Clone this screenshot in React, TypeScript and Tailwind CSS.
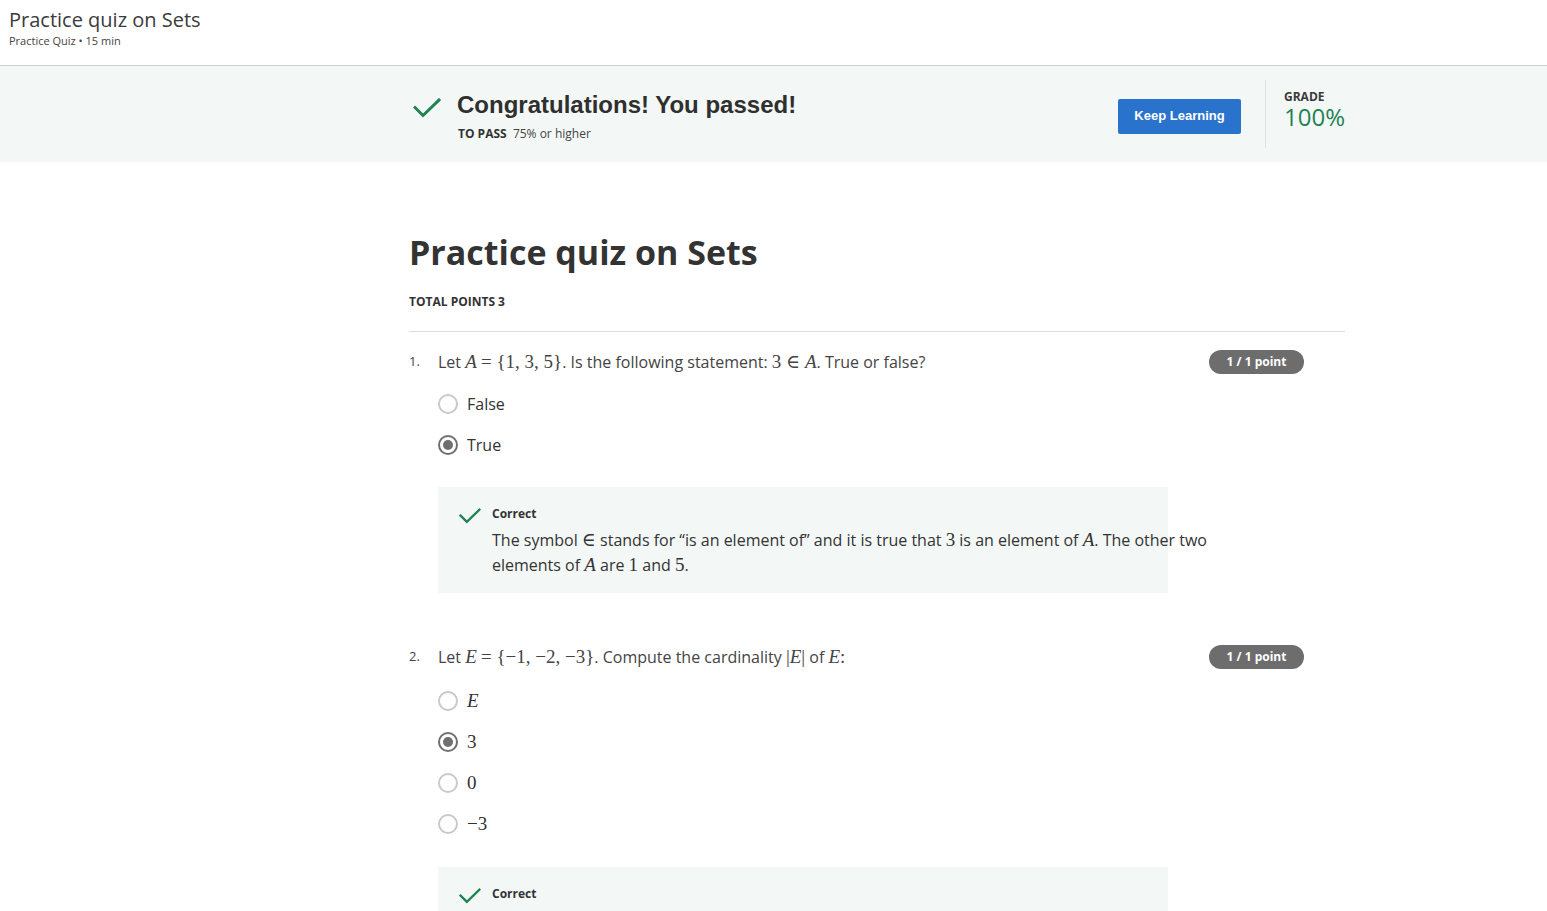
import type { ReactNode } from 'react';

const sans = "font-['Open_Sans',sans-serif]";
const arial = "font-['Liberation_Sans',sans-serif]";

function M({ children }: { children: ReactNode }) {
  return <span className="font-['Liberation_Serif','DejaVu_Serif',serif] text-[19px] leading-none">{children}</span>;
}

function V({ children }: { children: ReactNode }) {
  return <span className="font-['Liberation_Serif','DejaVu_Serif',serif] text-[19px] italic leading-none">{children}</span>;
}

function Check({ className }: { className: string }) {
  return (
    <svg viewBox="0 0 28 20" className={className} fill="none">
      <path d="M2 9.5 L10 17.5 L26 2" stroke="#1f8354" strokeWidth="3" strokeLinecap="square" />
    </svg>
  );
}

function Radio({ checked }: { checked?: boolean }) {
  return checked ? (
    <span className="flex h-5 w-5 shrink-0 items-center justify-center rounded-full border-2 border-[#6f6f6f]">
      <span className="h-[10px] w-[10px] rounded-full bg-[#6f6f6f]" />
    </span>
  ) : (
    <span className="h-5 w-5 shrink-0 rounded-full border-2 border-[#c9c9c9]" />
  );
}

function Option({ checked, children }: { checked?: boolean; children: ReactNode }) {
  return (
    <div className="flex h-[41px] items-center gap-[9px] text-[16px] text-[#333]">
      <Radio checked={checked} />
      <span>{children}</span>
    </div>
  );
}

function Badge() {
  return (
    <span className={`${sans} flex h-6 w-[95px] items-center justify-center rounded-full bg-[#6d6d6d] text-[12px] font-bold text-white`}>
      1 / 1 point
    </span>
  );
}

function Feedback({ children }: { children?: ReactNode }) {
  return (
    <div className="w-[730px] bg-[#f3f8f6] pl-[21px] pt-[19px] pb-[15px]">
      <div className="flex items-start gap-[11px]">
        <Check className="mt-[2px] h-[16px] w-[22px] shrink-0" />
        <div>
          <p className="text-[12px] font-bold leading-4 text-[#333]">Correct</p>
          {children && <div className="mt-[6px] w-[725px] text-[16px] leading-[25px] text-[#333]">{children}</div>}
        </div>
      </div>
    </div>
  );
}

export default function App() {
  return (
    <div className={`${sans} min-h-screen bg-white text-[#333]`}>
      <header className="h-[66px] border-b border-[#c8d3cf] px-[9px] pt-[7px]">
        <h1 className="text-[20px] leading-[26px] text-[#3b3b3b]">Practice quiz on Sets</h1>
        <p className="text-[11px] leading-4 text-[#444]">Practice Quiz • 15 min</p>
      </header>

      <section className="flex h-[96px] bg-[#f3f8f6]">
        <div className="ml-[409px] flex w-[936px] items-center">
          <Check className="mb-[12px] ml-[4px] h-[20px] w-[28px] shrink-0" />
          <div className="ml-[16px] mt-[6px] flex-1">
            <h2 className={`${arial} text-[24px] font-bold leading-7 text-[#2f2f2f]`}>Congratulations! You passed!</h2>
            <p className="mt-[6px] ml-[1px] text-[12px] text-[#444]">
              <span className="font-bold text-[#333]">TO PASS</span>&nbsp; 75% or higher
            </p>
          </div>
          <button className={`${arial} mt-[4px] h-[35px] w-[123px] rounded-[2px] bg-[#2a73cc] text-[13px] font-bold text-white`}>
            Keep Learning
          </button>
          <div className="ml-[24px] h-[68px] w-px bg-[#dde4e1]" />
          <div className="ml-[18px] mb-[10px]">
            <p className="text-[12px] font-bold leading-4 text-[#3a3a3a]">GRADE</p>
            <p className="text-[24px] leading-6 text-[#1f8354]">100%</p>
          </div>
        </div>
      </section>

      <main className="ml-[409px] w-[936px] pt-[67px]">
        <h1 className="text-[34px] font-bold leading-[46px] text-[#333]">Practice quiz on Sets</h1>
        <p className="mt-[19px] text-[12px] font-bold leading-4 text-[#333]">TOTAL POINTS 3</p>
        <div className="mt-[21px] border-t border-[#dcdcdc]" />

        <div className="mt-[18px] flex pr-[41px]">
          <span className="w-[29px] pt-[2px] text-[13px] text-[#444]">1.</span>
          <div className="flex-1">
            <p className="text-[16px] leading-6 text-[#444]">
              Let <V>A</V> <M>= {'{'}1, 3, 5{'}'}</M>. Is the following statement: <M>3 ∈ </M><V>A</V>. True or false?
            </p>
            <div className="mt-[9px]">
              <Option>False</Option>
              <Option checked>True</Option>
            </div>
            <div className="mt-[22px]">
              <Feedback>
                The symbol <M>∈</M> stands for “is an element of” and it is true that <M>3</M> is an element of <V>A</V>. The other two elements of <V>A</V> are <M>1</M> and <M>5</M>.
              </Feedback>
            </div>
          </div>
          <Badge />
        </div>

        <div className="mt-[52px] flex pr-[41px]">
          <span className="w-[29px] pt-[2px] text-[13px] text-[#444]">2.</span>
          <div className="flex-1">
            <p className="text-[16px] leading-6 text-[#444]">
              Let <V>E</V> <M>= {'{'}−1, −2, −3{'}'}</M>. Compute the cardinality <M>|</M><V>E</V><M>|</M> of <V>E</V><M>:</M>
            </p>
            <div className="mt-[11px]">
              <Option><V>E</V></Option>
              <Option checked><M>3</M></Option>
              <Option><M>0</M></Option>
              <Option><M>−3</M></Option>
            </div>
            <div className="mt-[23px]">
              <Feedback />
            </div>
          </div>
          <Badge />
        </div>
      </main>
    </div>
  );
}
